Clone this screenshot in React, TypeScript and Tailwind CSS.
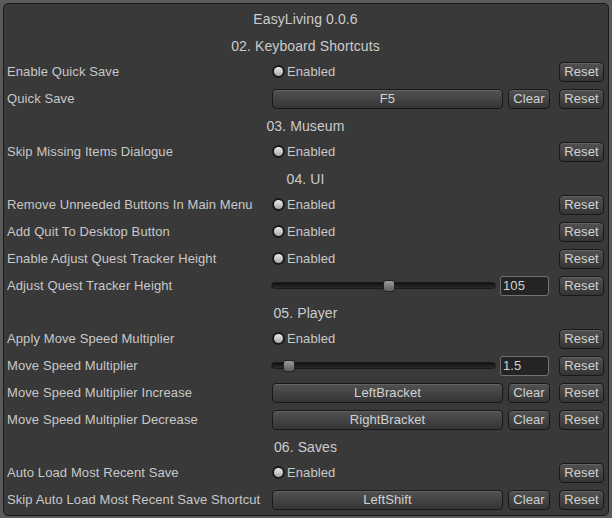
import React from 'react';

type Row =
  | { kind: 'title'; text: string }
  | { kind: 'header'; text: string }
  | { kind: 'toggle'; label: string }
  | { kind: 'key'; label: string; value: string }
  | { kind: 'slider'; label: string; value: string; thumb: number };

const rows: Row[] = [
  { kind: 'title', text: 'EasyLiving 0.0.6' },
  { kind: 'header', text: '02. Keyboard Shortcuts' },
  { kind: 'toggle', label: 'Enable Quick Save' },
  { kind: 'key', label: 'Quick Save', value: 'F5' },
  { kind: 'header', text: '03. Museum' },
  { kind: 'toggle', label: 'Skip Missing Items Dialogue' },
  { kind: 'header', text: '04. UI' },
  { kind: 'toggle', label: 'Remove Unneeded Buttons In Main Menu' },
  { kind: 'toggle', label: 'Add Quit To Desktop Button' },
  { kind: 'toggle', label: 'Enable Adjust Quest Tracker Height' },
  { kind: 'slider', label: 'Adjust Quest Tracker Height', value: '105', thumb: 112 },
  { kind: 'header', text: '05. Player' },
  { kind: 'toggle', label: 'Apply Move Speed Multiplier' },
  { kind: 'slider', label: 'Move Speed Multiplier', value: '1.5', thumb: 12 },
  { kind: 'key', label: 'Move Speed Multiplier Increase', value: 'LeftBracket' },
  { kind: 'key', label: 'Move Speed Multiplier Decrease', value: 'RightBracket' },
  { kind: 'header', text: '06. Saves' },
  { kind: 'toggle', label: 'Auto Load Most Recent Save' },
  { kind: 'key', label: 'Skip Auto Load Most Recent Save Shortcut', value: 'LeftShift' },
];

const btn =
  'h-[20px] flex items-center justify-center rounded-[4px] border border-[#181818] bg-gradient-to-b from-[#525252] to-[#353535] shadow-[inset_0_1px_0_rgba(255,255,255,0.1)] text-[#d2d2d2]';

const ResetButton = () => <div className={`${btn} w-[45px] shrink-0`}>Reset</div>;

const Radio = () => (
  <div className="flex items-center ml-[1px]">
    <div className="w-[13px] h-[13px] rounded-full bg-[#1a1a1a] flex items-center justify-center">
      <div className="w-[9px] h-[9px] rounded-full bg-gradient-to-b from-[#ececec] to-[#a8a8a8]" />
    </div>
    <span className="ml-[2px]">Enabled</span>
  </div>
);

const Slider = ({ thumb }: { thumb: number }) => (
  <div className="relative flex-1 h-[20px] flex items-center">
    <div className="w-full h-[7px] rounded-full bg-gradient-to-b from-[#111111] to-[#2c2c2c] border border-[#1a1a1a]" />
    <div
      className="absolute top-[4px] w-[12px] h-[12px] rounded-[3px] border border-[#222222] bg-gradient-to-b from-[#9a9a9a] to-[#5c5c5c]"
      style={{ left: thumb }}
    />
  </div>
);

const App: React.FC = () => {
  return (
    <div
      className="w-[612px] h-[518px] bg-[#5a5a5a] p-[3px] text-[13px] text-[#c8c8c8] tracking-[0.1px]"
      style={{ fontFamily: '"Liberation Sans", Arial, sans-serif' }}
    >
      <div className="w-[606px] h-[513px] rounded-[5px] border border-[#1a1a1a] bg-[#393939] pt-[2px] pl-[3px] pr-[4px] overflow-hidden">
        {rows.map((row, i) => {
          if (row.kind === 'title') {
            return (
              <div key={i} className="h-[26px] flex items-center justify-center text-[14px] text-[#cccccc]">
                {row.text}
              </div>
            );
          }
          if (row.kind === 'header') {
            return (
              <div key={i} className="h-[26px] pt-[2px] flex items-center justify-center text-[14px] text-[#cccccc]">
                {row.text}
              </div>
            );
          }
          return (
            <div key={i} className="h-[27px] flex items-center">
              <div className="w-[264px] shrink-0 whitespace-nowrap">{row.label}</div>
              {row.kind === 'toggle' && (
                <>
                  <Radio />
                  <div className="flex-1" />
                  <ResetButton />
                </>
              )}
              {row.kind === 'key' && (
                <>
                  <div className={`${btn} flex-1 ml-[1px] from-[#4e4e4e] to-[#2f2f2f]`}>{row.value}</div>
                  <div className={`${btn} w-[42px] ml-[5px]`}>Clear</div>
                  <div className="ml-[9px]">
                    <ResetButton />
                  </div>
                </>
              )}
              {row.kind === 'slider' && (
                <>
                  <Slider thumb={row.thumb} />
                  <div className="ml-[4px] w-[49px] h-[20px] rounded-[3px] border border-[#737373] bg-[#242424] pl-[2px] flex items-center text-[#d2d2d2]">
                    {row.value}
                  </div>
                  <div className="ml-[10px]">
                    <ResetButton />
                  </div>
                </>
              )}
            </div>
          );
        })}
      </div>
    </div>
  );
};

export default App;
